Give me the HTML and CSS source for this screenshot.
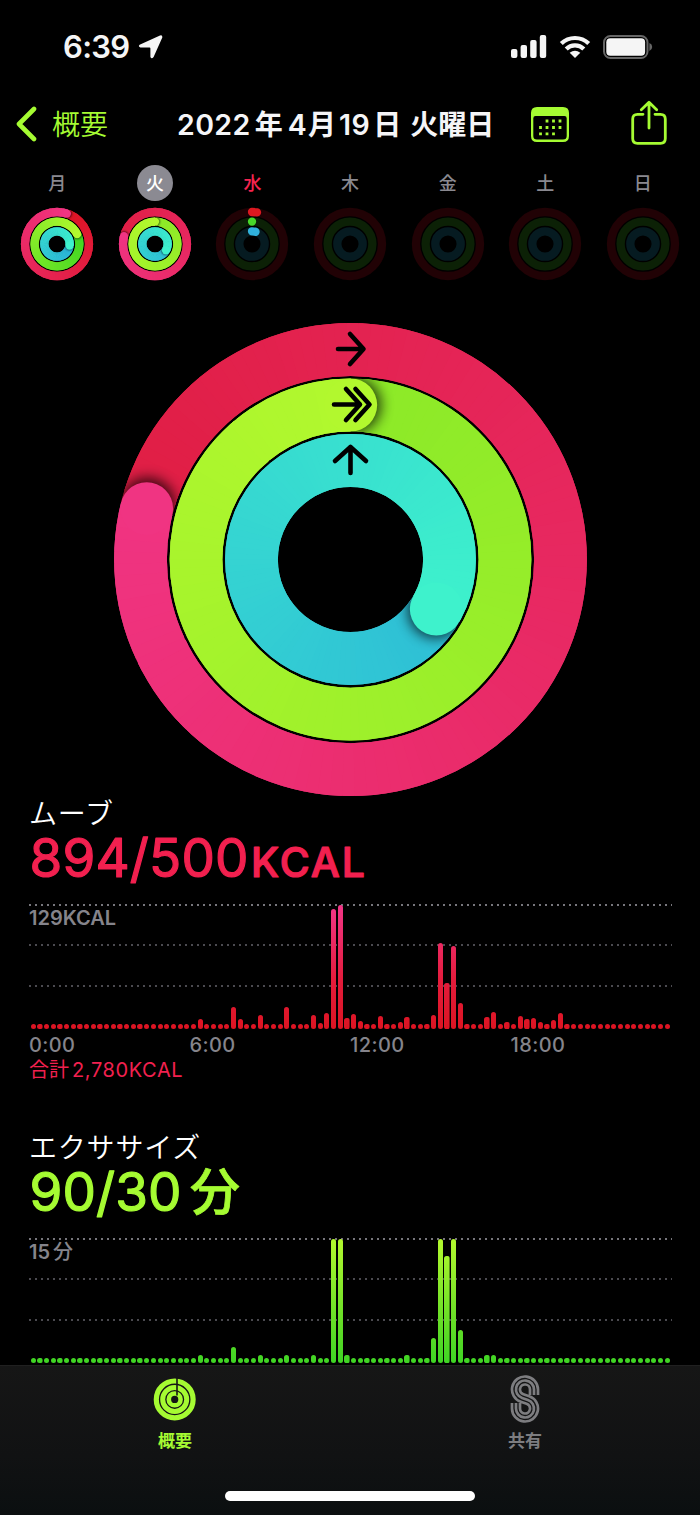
FILE: index.html
```
<!DOCTYPE html>
<html lang="ja">
<head>
    <meta charset="UTF-8">
    <meta name="viewport" content="width=device-width, initial-scale=1.0">
    <title>アクティビティ</title>
    <link rel="stylesheet" href="styles.css">
</head>
<body>
    <div class="screen">
        <div class="status-bar">
            <span class="time">6:39</span>
            <svg class="location" width="26" height="26" viewBox="0 0 26 26"><path d="M22 1.5 1.6 10.8Q-.2 12.6 2.4 13.4H11.6Q12.4 13.4 12.4 14.4V23Q13.6 25.6 15.6 23L24.3 3.6Q24.6 .6 22 1.5Z"/></svg>
            <div class="status-icons">
                <svg width="36" height="24" viewBox="0 0 36 24">
                    <rect x="0" y="14" width="6.4" height="9" rx="2"/>
                    <rect x="9.6" y="10" width="6.4" height="13" rx="2"/>
                    <rect x="19.2" y="5" width="6.4" height="18" rx="2"/>
                    <rect x="28.8" y="0" width="6.4" height="23" rx="2"/>
                </svg>
                <svg class="wifi" width="32" height="24" viewBox="0 0 32 24">
                    <path class="wifi-arc" d="M2.3 8.6A19.5 19.5 0 0 1 29.7 8.6M7.2 14A12.3 12.3 0 0 1 24.8 14"/>
                    <path d="M16 23 10.7 17.7Q16 13.6 21.3 17.7Z"/>
                </svg>
                <svg class="battery" width="50" height="24" viewBox="0 0 50 24">
                    <rect class="battery-case" x="1" y="1" width="43.5" height="22" rx="6.5"/>
                    <rect x="3.3" y="3.3" width="38.8" height="17.4" rx="4"/>
                    <path class="battery-tip" d="M46.4 8Q49.2 9.2 49.2 12T46.4 16Z"/>
                </svg>
            </div>
        </div>

        <div class="nav-bar">
            <svg class="back-arrow" width="22" height="36" viewBox="0 0 22 36"><path d="M19 3 4 18 19 33"/></svg>
            <span class="back-label">概要</span>
            <span class="title"><span class="num">2022</span><span class="year">年</span><span class="num">4</span><span class="month">月</span><span class="num">19</span><span class="date">日</span><span class="weekday">火曜日</span></span>
            <svg class="calendar-icon" width="40" height="38" viewBox="0 0 40 38">
                <path class="fill" fill-rule="evenodd" d="M7 1H33Q39 1 39 7V30Q39 36 33 36H7Q1 36 1 30V7Q1 1 7 1ZM5.5 10Q3.3 10 3.3 12.2V30Q3.3 33.6 7 33.6H33Q36.7 33.6 36.7 30V12.2Q36.7 10 34.5 10Z"/>
                <path class="dots" d="M17 15h0M23.5 15h0M30 15h0M10.5 21.5h0M17 21.5h0M23.5 21.5h0M30 21.5h0M10.5 27.8h0M17 27.8h0M23.5 27.8h0"/>
            </svg>
            <svg class="share-icon" width="36" height="46" viewBox="0 0 36 46"><path d="M12 14.3H6.5Q1.7 14.3 1.7 19.1V38.5Q1.7 43.3 6.5 43.3H29.5Q34.3 43.3 34.3 38.5V19.1Q34.3 14.3 29.5 14.3H24M18 28V2.5M10.3 9.8 18 2.2 25.7 9.8"/></svg>
        </div>

        <div id="week" class="week"></div>
        <div id="rings" class="rings"></div>

        <section class="metric move">
            <h2>ムーブ</h2>
            <svg class="value" width="400" height="90" viewBox="-4 -14 400 90">
                <text x="0.5" y="47.5" textLength="219">894/500</text>
                <text class="unit" x="222" y="47.5" textLength="114">KCAL</text>
            </svg>
            <div class="chart">
                <span class="scale">129KCAL</span>
                <div id="move-bars" class="bars"></div>
            </div>
            <div class="hours"><span>0:00</span><span>6:00</span><span>12:00</span><span>18:00</span></div>
            <p class="total">合計<span>2,780KCAL</span></p>
        </section>

        <section class="metric exercise">
            <h2>エクササイズ</h2>
            <svg class="value" width="400" height="90" viewBox="-4 -14 400 90">
                <text x="0.5" y="47.5" textLength="152">90/30</text>
                <text class="kanji" x="161" y="46.5">分</text>
            </svg>
            <div class="chart">
                <span class="scale">15<span class="scale-unit">分</span></span>
                <div id="exercise-bars" class="bars"></div>
            </div>
        </section>

        <div class="tab-bar">
            <div class="tab active">
                <svg width="44" height="48" viewBox="0 0 44 48">
                    <circle cx="21.7" cy="24.4" r="18.4" stroke-width="5.2"/>
                    <circle cx="21.7" cy="24.4" r="12" stroke-width="5"/>
                    <circle cx="21.7" cy="24.4" r="5.9" stroke-width="4.6"/>
                    <path class="cut" d="M24 2V20.5"/>
                </svg>
                <span>概要</span>
            </div>
            <div class="tab">
                <svg width="30" height="48" viewBox="0 0 30 48">
                    <path d="M28 20V14.5A13 13 0 1 0 10.84 26.81L16.6 28.76A5 5 0 1 1 10 33.5V28"/>
                    <path d="M24 20V14.5A9 9 0 1 0 12.12 23.02L17.88 24.98A9 9 0 1 1 6 33.5V28"/>
                    <path d="M20 20V14.5A5 5 0 1 0 13.4 19.24L19.16 21.19A13 13 0 1 1 2 33.5V28"/>
                </svg>
                <span>共有</span>
            </div>
            <div class="home-indicator"></div>
        </div>
    </div>
    <script src="script.js"></script>
</body>
</html>
```
FILE: styles.css
```
* {
    box-sizing: border-box;
}
body {
    margin: 0;
    background: #000;
    color: #fff;
    font-family: Inter, "Noto Sans CJK JP", sans-serif;
}
svg {
    display: block;
    flex: none;
}
.screen {
    width: 700px;
    height: 1515px;
    display: flex;
    flex-direction: column;
    overflow: hidden;
    position: relative;
}

/* Status bar */
.status-bar {
    height: 92px;
    display: flex;
    align-items: center;
    padding: 1px 47px 0 63px;
    fill: #f5f5f5;
}
.time {
    width: 67px;
    font-size: 31px;
    font-weight: 600;
    letter-spacing: -0.7px;
    color: #f5f5f5;
}
.location {
    margin-left: 8px;
}
.status-icons {
    display: flex;
    align-items: center;
    margin-left: auto;
}
.wifi {
    margin-left: 12px;
}
.wifi-arc {
    fill: none;
    stroke: #f5f5f5;
    stroke-width: 4.2;
}
.battery {
    margin-left: 12px;
}
.battery-case {
    fill: none;
    stroke: #666;
    stroke-width: 2;
}
.battery-tip {
    fill: #666;
}

/* Navigation */
.nav-bar {
    height: 68px;
    display: flex;
    align-items: center;
    padding: 0 33px 4px 15px;
    color: #a5fb32;
}
.back-arrow {
    fill: none;
    stroke: #a5fb32;
    stroke-width: 4.6;
    stroke-linecap: round;
    stroke-linejoin: round;
}
.back-label {
    width: 56px;
    margin-left: 15px;
    padding-top: 2px;
    font-size: 28px;
    font-weight: 350;
    line-height: 40px;
}
.title {
    width: 318px;
    margin-left: 69px;
    padding-top: 2px;
    color: #f5f5f7;
    font-size: 28px;
    font-weight: 600;
    line-height: 40px;
    white-space: nowrap;
}
.title .num {
    font-size: 28.5px;
    letter-spacing: 0.4px;
}
.year {
    margin: 0 5px 0 4px;
}
.month {
    margin: 0 3px 0 1px;
}
.date {
    margin-left: 3px;
}
.weekday {
    margin-left: 9px;
}
.calendar-icon {
    margin: 1px 0 0 35px;
}
.calendar-icon .fill {
    fill: #a5fb32;
}
.dots {
    fill: none;
    stroke: #a5fb32;
    stroke-linecap: square;
    stroke-width: 2.8;
}
.share-icon {
    margin: -2px 0 0 auto;
    fill: none;
    stroke: #a5fb32;
    stroke-width: 2.8;
    stroke-linecap: round;
    stroke-linejoin: round;
}

/* Week strip */
.week {
    display: grid;
    grid-template-columns: repeat(7, 97.6px);
    margin-left: 8.5px;
    height: 162px;
    padding-top: 5px;
}
.day {
    display: flex;
    flex-direction: column;
    align-items: center;
}
.day-name {
    width: 36px;
    height: 36px;
    border-radius: 50%;
    color: #8a8990;
    font-size: 18px;
    font-weight: 500;
    line-height: 37px;
    text-align: center;
}
.day-name.selected {
    background: #8b8a92;
    color: #fff;
}
.day-name.today {
    color: #f5244f;
}
.day svg {
    margin-top: 6px;
}
.rings {
    display: flex;
    justify-content: center;
    height: 475px;
}
.glyphs {
    fill: none;
    stroke: #000;
    stroke-width: 4.6;
    stroke-linecap: round;
    stroke-linejoin: round;
}

/* Move and exercise */
.metric {
    padding-left: 29px;
    height: 334px;
}
.metric h2 {
    margin: 0;
    font-size: 28px;
    font-weight: 350;
    line-height: 34px;
    letter-spacing: 0.8px;
}
.value {
    margin: -16px 0 -14px -4px;
    font-family: Inter, sans-serif;
    font-size: 53px;
    font-weight: 400;
    stroke-width: 1.2;
    stroke-linejoin: round;
}
.move .value {
    fill: #f2204f;
    stroke: #f2204f;
}
.exercise .value {
    fill: #a5fb32;
    stroke: #a5fb32;
}
.value .unit {
    font-size: 41px;
    font-weight: 500;
}
.value .kanji {
    font-family: "Noto Sans CJK JP", sans-serif;
    font-size: 50px;
    font-weight: 500;
    stroke-width: 0.8;
}
.chart {
    width: 643px;
    height: 124px;
    margin-top: 13px;
    background-image:
        radial-gradient(circle at 1px 1px, #77767c 0.9px, transparent 1.1px),
        radial-gradient(circle at 1px 1px, #4b4a50 0.9px, transparent 1.1px),
        radial-gradient(circle at 1px 1px, #4b4a50 0.9px, transparent 1.1px);
    background-size: 6px 2px;
    background-repeat: repeat-x;
    background-position: 0 0, 0 40px, 0 81px;
}
.scale {
    display: block;
    height: 22px;
    margin-bottom: -22px;
    padding-top: 3px;
    font-size: 20px;
    font-weight: 600;
    line-height: 22px;
    color: #85848b;
}
.scale-unit {
    margin-left: 3px;
    font-weight: 500;
}
.bars {
    display: flex;
    align-items: flex-end;
    height: 125px;
    margin-left: 1px;
}
.slot {
    width: 6.68px;
    display: flex;
    justify-content: center;
    flex: none;
}
.bar {
    width: 5.2px;
    border-radius: 2.6px;
    background-image: linear-gradient(to top, #dc1422, #e41c3c 40%, #f23688);
    background-size: 100% 124px;
    background-position: bottom;
}
.exercise .bar {
    background-image: linear-gradient(to top, #3ed424, #62dc26 30%, #b3f82e);
}
.hours {
    display: grid;
    grid-template-columns: repeat(4, 160.5px);
    margin-top: 5px;
    color: #85848b;
    font-size: 20px;
    font-weight: 550;
    line-height: 25px;
    letter-spacing: 0.4px;
}
.total {
    margin: 0;
    color: #f2204f;
    font-size: 20px;
    line-height: 25px;
}
.total span {
    margin-left: 3px;
    letter-spacing: 0.6px;
}

/* Tab bar */
.tab-bar {
    position: absolute;
    left: 0;
    right: 0;
    bottom: 0;
    height: 150px;
    display: grid;
    grid-template-columns: 1fr 1fr;
    grid-template-rows: 116px 10px;
    padding-top: 9px;
    border-top: 1px solid #202020;
    background: linear-gradient(#161616, #111213 60%, #0b0f10);
}
.tab {
    display: flex;
    flex-direction: column;
    align-items: center;
    color: #7d7d80;
    font-size: 17px;
    font-weight: 600;
    line-height: 24px;
}
.tab svg {
    fill: none;
    stroke: #7d7d80;
    stroke-width: 2.7;
}
.tab span {
    margin-top: 6px;
}
.tab.active {
    color: #a5fb32;
}
.tab.active svg {
    stroke: #a5fb32;
}
.tab.active .cut {
    stroke: #151515;
    stroke-width: 1.6;
}
.home-indicator {
    grid-column: 1 / 3;
    justify-self: center;
    width: 250px;
    height: 10px;
    border-radius: 5px;
    background: #fff;
}
```
FILE: script.js
```
let ringId = 0;

function mix(a, b, t) {
    const c = a.map((v, i) => Math.round(v + (b[i] - v) * t));
    return `rgb(${c.join(",")})`;
}

function point(c, r, deg) {
    const a = (deg - 90) * Math.PI / 180;
    return [c + r * Math.cos(a), c + r * Math.sin(a)];
}

// Arc from one angle to another, cut in short pieces so the colour can change along it
function arc(c, r, w, from, to, color) {
    let out = "";
    const step = 3;
    for (let a = from; a < to; a += step) {
        const end = Math.min(a + step, to);
        const [x1, y1] = point(c, r, a);
        const [x2, y2] = point(c, r, Math.min(end + 3, to));
        out += `<path d="M${x1} ${y1}A${r} ${r} 0 0 1 ${x2} ${y2}" fill="none" stroke="${color(a)}" stroke-width="${w}"/>`;
    }
    return out;
}

// A ring that has gone round at least once, head lying over its own tail
function fullRing(c, r, w, head, tail, tip) {
    const id = "ring" + ringId++;
    const color = a => mix(tail, tip, (a - head + 360) / 360);
    const [hx, hy] = point(c, r, head);
    const [sx, sy] = point(c, r, head + 1);
    const o = r + w / 2, n = r - w / 2;
    return `<clipPath id="${id}"><path clip-rule="evenodd" d="M${c - o} ${c}a${o} ${o} 0 1 0 ${2 * o} 0a${o} ${o} 0 1 0 ${-2 * o} 0M${c - n} ${c}a${n} ${n} 0 1 0 ${2 * n} 0a${n} ${n} 0 1 0 ${-2 * n} 0"/></clipPath>
        <filter id="${id}b" x="-50%" y="-50%" width="200%" height="200%"><feGaussianBlur stdDeviation="${w * 0.12}"/></filter>
        <g clip-path="url(#${id})">
        ${arc(c, r, w + 2, head - 360, head - 40, color)}
        <circle cx="${sx}" cy="${sy}" r="${w * 0.52}" fill="#000" opacity=".75" filter="url(#${id}b)"/>
        ${arc(c, r, w + 2, head - 42, head, color)}
        <circle cx="${hx}" cy="${hy}" r="${w / 2}" fill="${color(head)}"/>
        </g>`;
}

function partRing(c, r, w, track, end, color) {
    let out = `<circle cx="${c}" cy="${c}" r="${r}" fill="none" stroke="${track}" stroke-width="${w}"/>`;
    if (color) {
        const [x, y] = point(c, r, end);
        out += `<path d="M${c} ${c - r}A${r} ${r} 0 0 1 ${x} ${y}" fill="none" stroke="${color}" stroke-width="${w}" stroke-linecap="round"/>`;
    }
    return out;
}

function drawSvg(size, content) {
    return `<svg width="${size}" height="${size}" viewBox="0 0 ${size} ${size}">${content}</svg>`;
}

const pink = [240, 52, 130], lime = [178, 248, 46], aqua = [62, 242, 204];
const monday = [
    [18, [220, 20, 36], pink],
    [64, [62, 214, 34], lime],
    [97, [42, 176, 216], aqua]
];
const tuesday = [
    [284, [224, 30, 68], pink],
    [360.1, [140, 233, 40], lime],
    [120, [46, 190, 214], aqua]
];

const smallRadii = [32, 22.4, 12.7];
const tracks = ["#210205", "#0c2106", "#061b21"];
const todayRings = [[9, "#dc1820"], [0.1, "#48d82a"], [16, "#30b1dc"]];

const days = ["月", "火", "水", "木", "金", "土", "日"];
document.getElementById("week").innerHTML = days.map((name, i) => {
    const data = [monday, tuesday][i];
    const content = smallRadii.map((r, k) => {
        if (data) return fullRing(37, r, 8.3, ...data[k]);
        const today = i === 2 ? todayRings[k] : [0, ""];
        return partRing(37, r, 8.3, tracks[k], ...today);
    }).join("");
    const cls = i === 1 ? " selected" : i === 2 ? " today" : "";
    return `<div class="day"><div class="day-name${cls}">${name}</div>${drawSvg(74, content)}</div>`;
}).join("");

const bigRadii = [210, 154.5, 99];
document.getElementById("rings").innerHTML = drawSvg(475,
    bigRadii.map((r, k) => fullRing(237.5, r, 52.8, ...tuesday[k])).join("") +
    `<g class="glyphs">
        <path d="M225 27H250M237 12 250.5 27 237 42"/>
        <path d="M221 82.5H247M233 67 247 82.5 233 98M242.5 67 256.5 82.5 242.5 98"/>
        <path d="M237.5 151V125M222 139 237.5 125 253 139"/>
    </g>`);

// Heights in px by quarter hour, every other slot gets the minimum dot
const moveData = {
    25: 10.5, 30: 22.5, 31: 10.5, 34: 14, 38: 22, 42: 14, 43: 6.5, 44: 16.5, 45: 120, 46: 124,
    47: 11, 48: 15, 49: 8.5, 50: 5.5, 52: 13, 55: 7.5, 56: 12, 60: 14.5, 61: 86.5, 62: 46,
    63: 83, 64: 26, 68: 12, 69: 17, 71: 7, 73: 13, 74: 10, 75: 11, 76: 7, 78: 9, 79: 16
};
const exerciseData = {
    25: 8.5, 30: 16.5, 34: 8.5, 38: 8.5, 42: 8.5, 45: 124, 46: 124, 47: 8.5, 56: 8.5,
    60: 25, 61: 124, 62: 107.5, 63: 124, 64: 33, 68: 8.5, 69: 8.5
};

function drawBars(id, data) {
    let html = "";
    for (let i = 0; i < 96; i++) {
        html += `<div class="slot"><div class="bar" style="height: ${data[i] || 5}px"></div></div>`;
    }
    document.getElementById(id).innerHTML = html;
}

drawBars("move-bars", moveData);
drawBars("exercise-bars", exerciseData);
```
